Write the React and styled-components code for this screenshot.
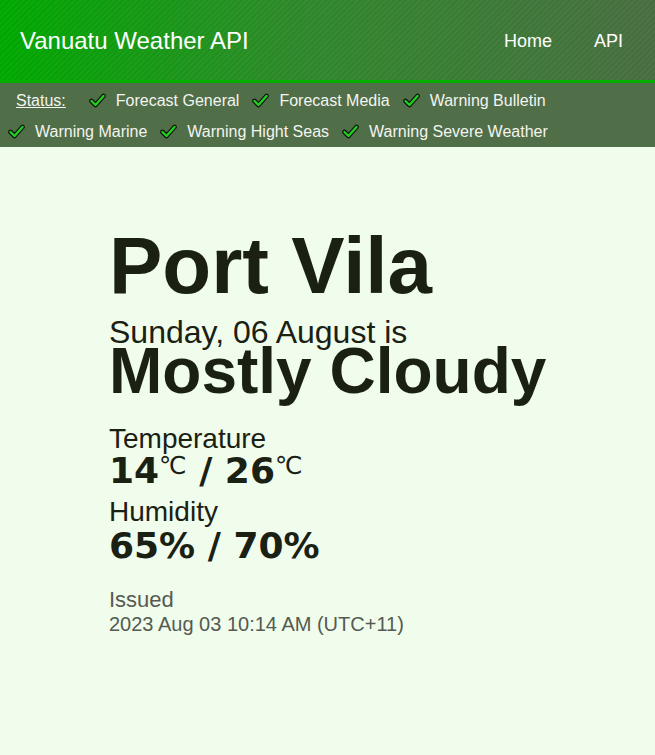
import styled, { createGlobalStyle } from "styled-components";

const GlobalStyle = createGlobalStyle`
  body {
    margin: 0;
    background: #f0fcec;
    font-family: "Liberation Sans", Arial, sans-serif;
    color: #1a2012;
  }
`;

const Header = styled.header`
  display: flex;
  align-items: center;
  justify-content: space-between;
  padding: 2px 20px 0;
  box-sizing: border-box;
  height: 83px;
  border-bottom: 3px solid #00b000;
  background:
    repeating-linear-gradient(
      135deg,
      rgba(255, 255, 255, 0.025) 0 2px,
      rgba(0, 0, 0, 0.025) 2px 4px
    ),
    linear-gradient(90deg, #00aa00 0%, #2f8a2c 45%, #4a6f42 100%);
`;

const Brand = styled.div`
  color: #fff;
  font-size: 24px;
`;

const Nav = styled.nav`
  display: flex;
  gap: 42px;
  padding-right: 12px;
`;

const NavLink = styled.a`
  color: #fff;
  font-size: 18px;
  text-decoration: none;
`;

const StatusBar = styled.div`
  background: #506e48;
  display: flex;
  flex-wrap: wrap;
  align-items: center;
  padding: 2px 0 0 8px;
  height: 64px;
  box-sizing: border-box;
  color: #f4f4f0;
  font-size: 16px;
`;

const StatusLabel = styled.span`
  display: flex;
  align-items: center;
  height: 31px;
  margin: 0 23px 0 8px;
  text-decoration: underline;
`;

const StatusItem = styled.span`
  display: flex;
  align-items: center;
  gap: 10px;
  height: 31px;
  margin-right: 13px;
`;

const Main = styled.main`
  padding: 79px 20px 80px 109px;
`;

const City = styled.h1`
  margin: 0;
  font-size: 80px;
  font-weight: 700;
  line-height: 1;
`;

const DateLine = styled.div`
  margin-top: 10px;
  font-size: 32px;
  line-height: 1;
`;

const Condition = styled.h2`
  margin: -9px 0 0;
  font-size: 64px;
  font-weight: 700;
  line-height: 1;
`;

const Stat = styled.section`
  margin-top: ${(p) => p.$gap}px;
`;

const StatLabel = styled.div`
  font-size: 28px;
  line-height: 1;
`;

const StatValue = styled.div`
  margin-top: ${(p) => p.$gap}px;
  font-family: "DejaVu Sans", Verdana, sans-serif;
  font-weight: 700;
  font-size: 36px;
  line-height: 1;
`;

const Unit = styled.sup`
  font-weight: 400;
  font-size: 24.5px;
  vertical-align: 9px;
  line-height: 0;
`;

const Issued = styled.div`
  margin-top: 25px;
  color: #555a52;
`;

const IssuedLabel = styled.div`
  font-size: 22px;
  line-height: 1;
`;

const IssuedTime = styled.div`
  margin-top: 3px;
  font-size: 20px;
  line-height: 1;
`;

const Check = () => (
  <svg width="17" height="15" viewBox="0 0 17 15">
    <path
      d="M2.5 8 L6.5 12 L14.5 3"
      fill="none"
      stroke="#111"
      strokeWidth="4.6"
      strokeLinecap="round"
      strokeLinejoin="round"
    />
    <path
      d="M2.5 8 L6.5 12 L14.5 3"
      fill="none"
      stroke="#1fd01f"
      strokeWidth="2.4"
      strokeLinecap="round"
      strokeLinejoin="round"
    />
  </svg>
);

const feeds = [
  "Forecast General",
  "Forecast Media",
  "Warning Bulletin",
  "Warning Marine",
  "Warning Hight Seas",
  "Warning Severe Weather",
];

export default function App() {
  return (
    <>
      <GlobalStyle />
      <Header>
        <Brand>Vanuatu Weather API</Brand>
        <Nav>
          <NavLink href="#">Home</NavLink>
          <NavLink href="#">API</NavLink>
        </Nav>
      </Header>
      <StatusBar>
        <StatusLabel>Status:</StatusLabel>
        {feeds.map((f) => (
          <StatusItem key={f}>
            <Check />
            {f}
          </StatusItem>
        ))}
      </StatusBar>
      <Main>
        <City>Port Vila</City>
        <DateLine>Sunday, 06 August is</DateLine>
        <Condition>Mostly Cloudy</Condition>
        <Stat $gap={22}>
          <StatLabel>Temperature</StatLabel>
          <StatValue $gap={0}>
            14<Unit>℃</Unit> / 26<Unit>℃</Unit>
          </StatValue>
        </Stat>
        <Stat $gap={9}>
          <StatLabel>Humidity</StatLabel>
          <StatValue $gap={2}>65% / 70%</StatValue>
        </Stat>
        <Issued>
          <IssuedLabel>Issued</IssuedLabel>
          <IssuedTime>2023 Aug 03 10:14 AM (UTC+11)</IssuedTime>
        </Issued>
      </Main>
    </>
  );
}
